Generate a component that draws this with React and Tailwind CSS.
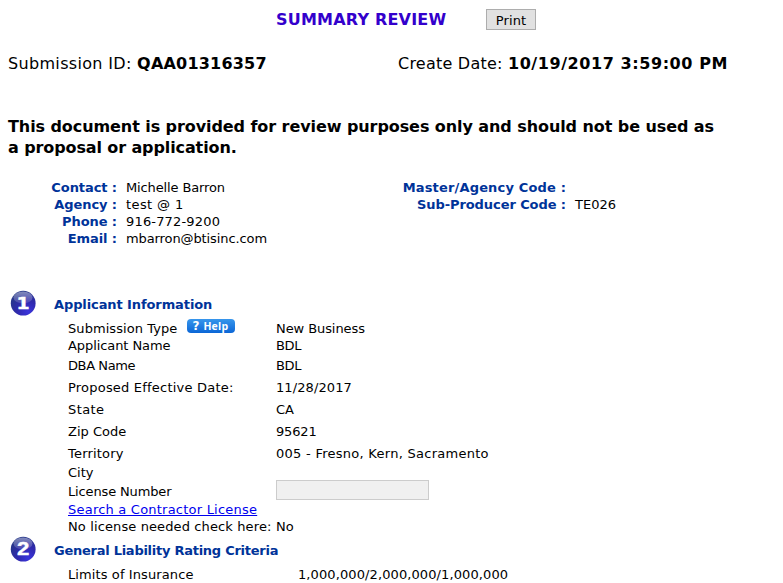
const rows = [
  { label: 'Submission Type', value: 'New Business', h: 'h-[17px]', lt: 'tracking-[0.07px]', vt: 'tracking-[-0.08px]', help: true },
  { label: 'Applicant Name', value: 'BDL', h: 'h-[17px]', lt: 'tracking-[-0.08px]', vt: 'tracking-[-0.4px]' },
  { label: 'DBA Name', value: 'BDL', h: 'h-[23px]', lt: 'tracking-[-0.4px]', vt: 'tracking-[-0.4px]' },
  { label: 'Proposed Effective Date:', value: '11/28/2017', h: 'h-[21px]', lt: 'tracking-[0.21px]', vt: 'tracking-[0.1px]' },
  { label: 'State', value: 'CA', h: 'h-[22px]', lt: 'tracking-[0.4px]', vt: 'tracking-normal' },
  { label: 'Zip Code', value: '95621', h: 'h-[22px]', lt: 'tracking-normal', vt: 'tracking-[-0.15px]' },
  { label: 'Territory', value: '005 - Fresno, Kern, Sacramento', h: 'h-[22px]', lt: 'tracking-[0.2px]', vt: 'tracking-[0.27px]' },
  { label: 'City', value: '', h: 'h-[17px]', lt: 'tracking-normal', vt: 'tracking-normal' },
];

const contact = [
  ['Contact', 'Michelle Barron', 'tracking-[-0.13px]'],
  ['Agency', 'test @ 1', 'tracking-[0.4px]'],
  ['Phone', '916-772-9200', 'tracking-[0.17px]'],
  ['Email', 'mbarron@btisinc.com', 'tracking-[-0.1px]'],
];

function Ball({ n }) {
  return (
    <svg width="26" height="26" viewBox="0 0 26 26" className="mt-[-2px] block">
      <defs>
        <radialGradient id={'ball' + n} cx="0.7" cy="0.85" r="0.85">
          <stop offset="0" stopColor="#3a34dc" />
          <stop offset="0.5" stopColor="#3029ae" />
          <stop offset="1" stopColor="#263688" />
        </radialGradient>
        <linearGradient id={'shine' + n} x1="0" y1="0" x2="0" y2="1">
          <stop offset="0" stopColor="#fff" stopOpacity="0.42" />
          <stop offset="1" stopColor="#fff" stopOpacity="0.12" />
        </linearGradient>
      </defs>
      <circle cx="13.2" cy="13.2" r="12.4" fill={'url(#ball' + n + ')'} />
      <ellipse cx="13" cy="7.5" rx="9.5" ry="6" fill={'url(#shine' + n + ')'} />
      <text
        x="13"
        y="18.6"
        textAnchor="middle"
        fontSize={n === 1 ? 16 : 18}
        fontWeight="bold"
        fill="#fff"
        stroke="#fff"
        strokeWidth="0.4"
        textLength={n === 1 ? 13 : 12}
        lengthAdjust="spacingAndGlyphs"
        className={n === 1 ? "font-['DejaVu_Sans']" : "font-['Liberation_Sans']"}
      >
        {n}
      </text>
    </svg>
  );
}

function Heading({ n, children, className }) {
  return (
    <div className={'flex items-center pl-[10px] ' + className}>
      <Ball n={n} />
      <h2 className="ml-[18px] font-bold text-[#003399]">{children}</h2>
    </div>
  );
}

export default function App() {
  return (
    <div className="w-[783px] h-[583px] overflow-hidden bg-white font-['DejaVu_Sans',sans-serif] text-black text-[13px] leading-[17px] whitespace-nowrap">
      <div className="flex h-[40px] pl-[276px] pt-[9px]">
        <h1 className="w-[210px] pt-px text-[16px] leading-[20px] font-bold tracking-[0.2px] text-[#3300cc]">SUMMARY REVIEW</h1>
        <button className="w-[50px] h-[21px] border border-[#adadad] bg-[#e1e1e1] text-[13px] leading-[21px] tracking-[0.15px]">Print</button>
      </div>
      <div className="flex h-[76px] pl-[8px] pt-[14px] text-[16px] leading-[20px]">
        <p className="w-[390px] tracking-[0.33px]">Submission ID: <b className="tracking-[0.2px]">QAA01316357</b></p>
        <p className="tracking-[0.23px]">Create Date: <b className="tracking-[0.57px]">10/19/2017 3:59:00 PM</b></p>
      </div>
      <p className="h-[63px] pl-[8px] text-[16px] leading-[21px] font-bold tracking-[-0.078px]">
        This document is provided for review purposes only and should not be used as<br />
        <span className="tracking-[-0.11px]">a proposal or application.</span>
      </p>
      <div className="flex h-[111px]">
        <div className="w-[390px]">
          {contact.map(([k, v, t]) => (
            <div key={k} className="flex">
              <b className="w-[117px] text-right tracking-[-0.08px] text-[#003399]">{k} :</b>
              <span className={'ml-[9px] ' + t}>{v}</span>
            </div>
          ))}
        </div>
        <div>
          <div className="flex"><b className="w-[176px] text-right tracking-[0.16px] text-[#003399]">Master/Agency Code :</b></div>
          <div className="flex"><b className="w-[176px] text-right tracking-[-0.08px] text-[#003399]">Sub-Producer Code :</b><span className="ml-[9px]">TE026</span></div>
        </div>
      </div>
      <Heading n={1} className="mb-[2px] h-[28px] tracking-[-0.1px]">Applicant Information</Heading>
      {rows.map((r) => (
        <div key={r.label} className={'flex items-center pl-[68px] ' + r.h}>
          <div className="flex w-[208px] items-center">
            <span className={r.lt}>{r.label}</span>
            {r.help && (
              <span className="ml-[10px] mb-[5px] flex h-[14px] w-[48px] items-center gap-[4px] rounded-[4px] bg-linear-to-b from-[#3796ec] to-[#0a66d6] pl-[5px] text-[10px] leading-[14px] font-bold text-white">
                <span className="text-[12px]">?</span><span className="font-['Open_Sans'] text-[10.5px] tracking-[0.2px]">Help</span>
              </span>
            )}
          </div>
          <span className={r.vt}>{r.value}</span>
        </div>
      ))}
      <div className="flex h-[20px] items-center pl-[68px]">
        <span className="w-[208px] tracking-[-0.14px]">License Number</span>
        <input disabled className="mt-[-3px] h-[20px] w-[153px] border border-[#cccccc] bg-[#f0f0f0]" />
      </div>
      <div className="h-[17px] pl-[68px]"><a className="tracking-[0.22px] text-[#0000ee] underline">Search a Contractor License</a></div>
      <div className="flex h-[17px] pl-[68px]"><span className="w-[208px] tracking-[0.12px]">No license needed check here:</span><span>No</span></div>
      <Heading n={2} className="h-[30px] tracking-[-0.26px]">General Liability Rating Criteria</Heading>
      <div className="flex h-[18px] items-center pl-[68px]"><span className="w-[230px] tracking-[0.1px]">Limits of Insurance</span><span className="tracking-[0.1px]">1,000,000/2,000,000/1,000,000</span></div>
    </div>
  );
}
